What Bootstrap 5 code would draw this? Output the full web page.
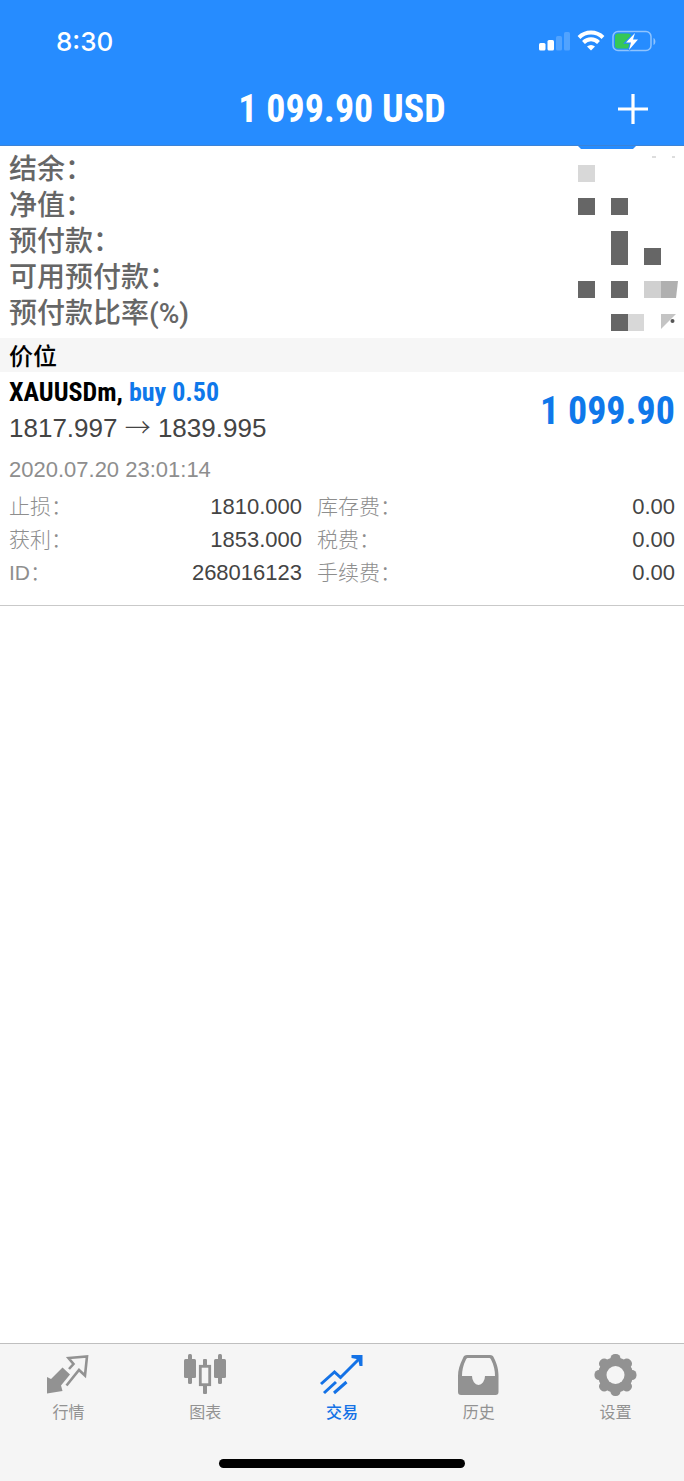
<!DOCTYPE html>
<html lang="zh-CN">
<head>
<meta charset="utf-8">
<meta name="viewport" content="width=device-width, initial-scale=1">
<title>交易</title>
<link href="https://cdn.jsdelivr.net/npm/bootstrap@5.3.0/dist/css/bootstrap.min.css" rel="stylesheet">
<style>
  body { font-family: "Liberation Sans", "Noto Sans CJK SC", sans-serif; color: #444; }
  .app-head { background: #268cff; border-bottom: 1px solid #3c83d6; color: #fff; }
  .clock { font: 500 26px/32px Inter, sans-serif; padding-left: 56px; }
  .signals { padding-right: 27px; }
  .status-row { padding-top: 26px; height: 73px; }
  .title-row { height: 72px; padding: 0 35px; }
  .side-slot { width: 36px; }
  .condensed { font-family: "Roboto Condensed", "Liberation Sans", sans-serif; font-weight: 700; }
  .big-sum { font-size: 38px; line-height: 48px; }
  .accent { color: #0f78ea; }
  .side-pad { padding-left: 9px; padding-right: 9px; }
  .funds { color: #666; font: 500 28px/36px Roboto, "Noto Sans CJK SC", sans-serif; padding: 6px 0 6px 9px; }
  .section-title { background: #f6f6f6; color: #000; font: 500 24px/34px "Noto Sans CJK SC", sans-serif; }
  .deal { border-bottom: 1px solid #c9c9c9; padding-top: 4px; padding-bottom: 16px; }
  .deal-name { font-size: 26px; line-height: 33px; color: #000; }
  .deal-price { font-size: 26px; line-height: 33px; }
  .deal-price span { font-family: "Noto Sans CJK SC", sans-serif; font-weight: 300; }
  .deal-date { font-size: 22px; line-height: 33px; color: #8e8e8e; padding-top: 8px; padding-bottom: 4px; }
  .deal-facts { font-size: 22px; line-height: 33px; table-layout: fixed; }
  .deal-facts th { font-weight: 300; font-size: 21px; color: #8e8e8e; padding: 0; }
  .deal-facts td { text-align: right; padding: 0; }
  .deal-facts .c-one { width: 16%; } .deal-facts .c-two { width: 28%; }
  .deal-facts td + th { padding-left: 15px; }
  .tab-area { background: #f5f5f5; border-top: 1px solid #bfbfbf; padding-bottom: 13px; }
  .tab-link { color: #929292; font: 400 16px/24px "Noto Sans CJK SC", sans-serif; padding-top: 10px; height: 115px; text-decoration: none; }
  .tab-link.active { color: #1472e6; font-weight: 500; }
  .tab-link svg { margin-bottom: 3px; }
  .home-bar { width: 36%; height: 9px; background: #000; }
</style>
</head>
<body class="bg-white">
<div class="d-flex flex-column min-vh-100">
  <header class="app-head">
    <div class="status-row d-flex justify-content-between align-items-start">
      <div class="clock">8:30</div>
      <div class="signals d-flex align-items-center pt-1">
        <svg width="118" height="24" viewBox="0 0 118 24" aria-hidden="true">
          <g fill="#fff">
            <rect x="0" y="13" width="6.500" height="7.500" rx="1.500"/><rect x="8.500" y="10" width="6.500" height="10.500" rx="1.500"/>
            <rect x="17" y="6" width="6" height="14.500" rx="1.500" opacity=".2"/><rect x="25" y="2" width="6" height="18.500" rx="1.500" opacity=".2"/>
          </g>
          <g fill="none" stroke="#fff" stroke-width="4"><path d="M40 7.500a17 17 0 0 1 24 0"/><path d="M44.500 12.500a10.500 10.500 0 0 1 15 0"/></g>
          <path d="M52 20.500l-4-4a6 6 0 0 1 8 0z" fill="#fff"/>
          <rect x="74" y="1.500" width="38" height="19" rx="5" fill="none" stroke="#8fc4ff" stroke-width="1.500"/>
          <rect x="76" y="3.500" width="16" height="15" rx="3" fill="#35c759"/>
          <path d="M114.500 8v7c2.500-1 2.500-6 0-7z" fill="#8fc4ff"/>
          <path d="M96 3l-9 9.500h5l-2 7.500 9-10.500h-5z" fill="#fff" stroke="#268cff" stroke-width="2.500" paint-order="stroke"/>
        </svg>
      </div>
    </div>
    <div class="title-row d-flex align-items-center">
      <div class="side-slot"></div>
      <h1 class="condensed big-sum flex-fill text-center mb-0">1 099.90 USD</h1>
      <button type="button" class="btn side-slot p-0 border-0 text-white text-end lh-1" aria-label="新订单">
        <svg width="32" height="32" viewBox="0 0 32 32" stroke="#fff" stroke-width="3.200"><path d="M16 1v30M1 16h30"/></svg>
      </button>
    </div>
  </header>

  <main class="flex-grow-1">
    <section class="d-flex justify-content-between align-items-start">
      <div class="funds">
        <div>结余：</div>
        <div>净值：</div>
        <div>预付款：</div>
        <div>可用预付款：</div>
        <div>预付款比率(%)</div>
      </div>
      <svg width="106" height="190" viewBox="578 146 106 190" aria-hidden="true">
        <path d="M578 146h58l-3 3h-52z" fill="#268cff"/>
        <path d="M652 157h4M672 157h3" stroke="#bbb"/>
        <path d="M578 198h17v17h-17zM611 198h17v17h-17zM611 231h17v34h-17zM644 248h17v17h-17zM578 281h17v17h-17zM611 281h17v17h-17zM611 314h17v17h-17z" fill="#666"/>
        <path d="M578 165h17v17h-17zM628 314h16v17h-16z" fill="#d8d8d8"/>
        <path d="M644 281h17v17h-17z" fill="#d0d0d0"/>
        <path d="M661 281h17l-2 17h-15z" fill="#b0b0b0"/>
        <path d="M661 314h15l-15 15z" fill="#c4c4c4"/><circle cx="672.500" cy="321" r="2" fill="#555"/>
      </svg>
    </section>
    <h2 class="section-title side-pad mb-0">价位</h2>
    <article class="deal side-pad">
      <div class="d-flex justify-content-between align-items-center">
        <div>
          <div class="condensed deal-name">XAUUSDm, <span class="accent">buy 0.50</span></div>
          <div class="deal-price">1817.997 <span>→</span> 1839.995</div>
        </div>
        <div class="condensed big-sum accent">1 099.90</div>
      </div>
      <div class="deal-date">2020.07.20 23:01:14</div>
      <table class="deal-facts w-100">
        <colgroup><col class="c-one"><col class="c-two"><col class="c-two"><col class="c-two"></colgroup>
        <tbody>
          <tr><th scope="row">止损：</th><td>1810.000</td><th scope="row">库存费：</th><td>0.00</td></tr>
          <tr><th scope="row">获利：</th><td>1853.000</td><th scope="row">税费：</th><td>0.00</td></tr>
          <tr><th scope="row">ID：</th><td>268016123</td><th scope="row">手续费：</th><td>0.00</td></tr>
        </tbody>
      </table>
    </article>
  </main>

  <footer class="tab-area">
    <nav class="row g-0 text-center">
      <a href="#" class="col tab-link">
        <svg class="d-block mx-auto" width="44" height="42" viewBox="0 0 44 42"><path d="M16.500 13.500l7.500 7-9 11 1.500 5.500L1 39.500V23l4 2z" fill="#929292"/><path d="M23 15l4.500-5-5-6L41 2.500 39 21.500l-6-5.500L20.500 31.500" fill="none" stroke="#929292" stroke-width="2.600"/></svg>
        行情
      </a>
      <a href="#" class="col tab-link">
        <svg class="d-block mx-auto" width="44" height="42" viewBox="0 0 44 42"><g fill="#929292"><rect x="1" y="5" width="12" height="19" rx="1.500"/><rect x="5" y="0" width="4" height="30" rx="1.500"/><rect x="31" y="5" width="12" height="19" rx="1.500"/><rect x="35" y="0" width="4" height="30" rx="1.500"/><rect x="20" y="5" width="4" height="8" rx="1"/><rect x="20" y="31" width="4" height="9" rx="1"/></g><rect x="17.300" y="12.300" width="9.400" height="18.400" fill="none" stroke="#929292" stroke-width="2.800"/></svg>
        图表
      </a>
      <a href="#" class="col tab-link active" aria-current="page">
        <svg class="d-block mx-auto" width="44" height="42" viewBox="0 0 44 42"><g fill="none" stroke="#1472e6" stroke-width="3"><path d="M1 30L14.500 18l6 5.500L39 5"/><path d="M4 39L16 28M14 39L26.500 28"/></g><path d="M31.500 1h11v11h-3l-1-5-2-2-5-1z" fill="#1472e6"/></svg>
        交易
      </a>
      <a href="#" class="col tab-link">
        <svg class="d-block mx-auto" width="44" height="42" viewBox="0 0 44 42"><path fill="#929292" fill-rule="evenodd" d="M10 1h23c2 0 3.500 1 4 3 3.500 7 4.500 12 4.500 18V38c0 2-1 3-3 3H4c-2 0-3-1-3-3V22C1 16 2.500 11 6 4c.5-2 2-3 4-3zM11 4c-1 0-1.500.5-2 1.500-3 6-4 11-4 16.500h10a6.500 9 0 0 0 13 0h10c0-5.500-1-10.500-4-16.500-.5-1-1-1.500-2-1.500z"/></svg>
        历史
      </a>
      <a href="#" class="col tab-link">
        <svg class="d-block mx-auto" width="44" height="42" viewBox="0 0 44 42"><g fill="#929292"><rect x="16.500" y="0" width="10" height="42" rx="4.500"/><rect x="16.500" y="0" width="10" height="42" rx="4.500" transform="rotate(90 21.500 21)"/><rect x="16.500" y="0" width="10" height="42" rx="4.500" transform="rotate(45 21.500 21)"/><rect x="16.500" y="0" width="10" height="42" rx="4.500" transform="rotate(135 21.500 21)"/><circle cx="21.500" cy="21" r="17.500"/></g><circle cx="21.500" cy="21" r="9" fill="#f5f5f5"/></svg>
        设置
      </a>
    </nav>
    <div class="home-bar rounded-pill mx-auto"></div>
  </footer>
</div>
<script src="https://cdn.jsdelivr.net/npm/bootstrap@5.3.0/dist/js/bootstrap.bundle.min.js"></script>
</body>
</html>
